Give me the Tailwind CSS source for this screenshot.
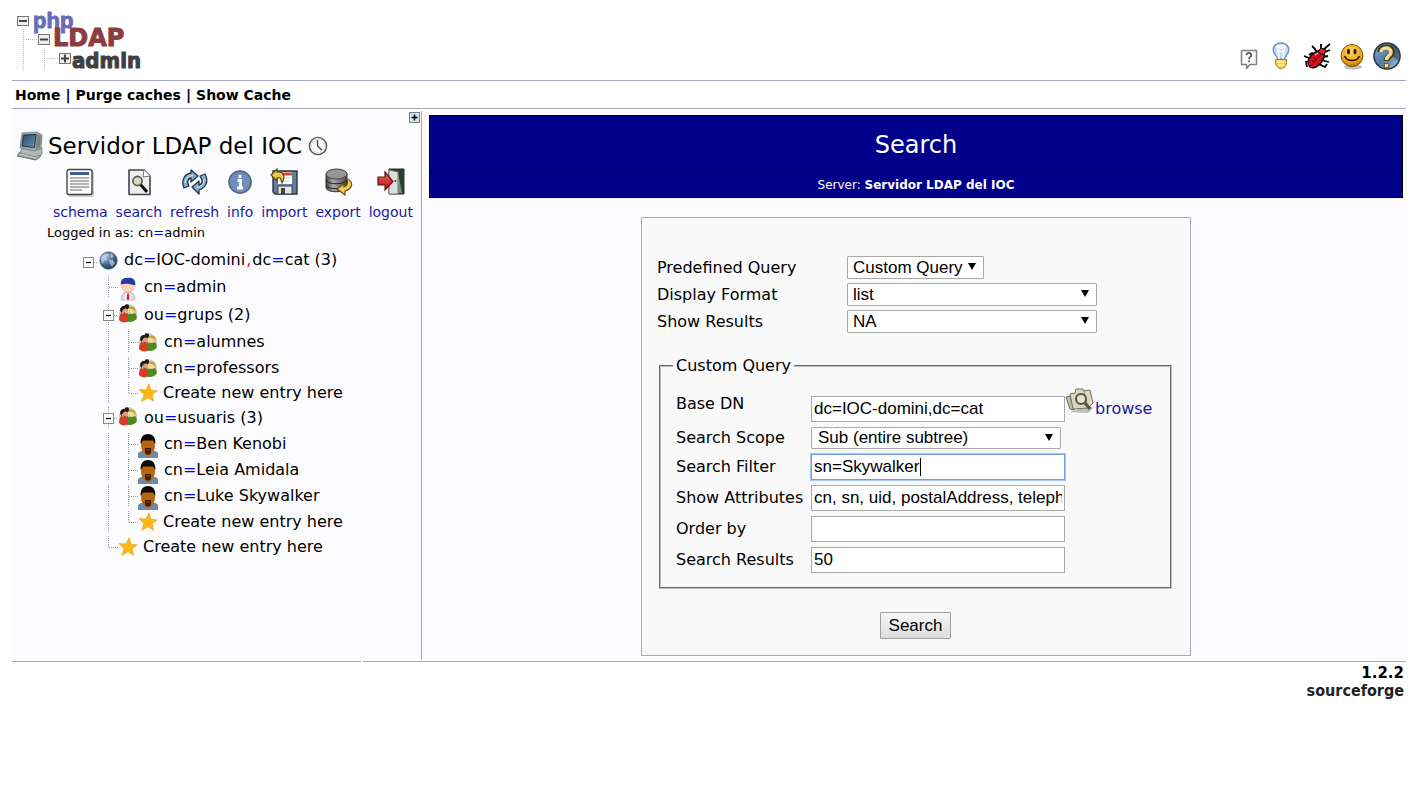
<!DOCTYPE html>
<html lang="en">
<head>
<meta charset="utf-8">
<title>phpLDAPadmin - Search</title>
<script src="https://cdn.jsdelivr.net/npm/@tailwindcss/browser@4"></script>
</head>
<body class="bg-white text-black text-[16px] font-['Verdana','DejaVu_Sans',sans-serif]">

<svg class="absolute h-0 w-0" aria-hidden="true">
  <defs>
    <radialGradient id="gGlobe" cx=".35" cy=".3" r=".8"><stop offset="0" stop-color="#9dbbd9"/><stop offset=".5" stop-color="#4b7099"/><stop offset="1" stop-color="#12243f"/></radialGradient>
    <radialGradient id="gSmile" cx=".45" cy=".3" r=".75"><stop offset="0" stop-color="#ffd65c"/><stop offset=".7" stop-color="#e9a01d"/><stop offset="1" stop-color="#9c6200"/></radialGradient>
    <linearGradient id="gHelp" x1="0" y1="0" x2="1" y2="1"><stop offset="0" stop-color="#8fb0cf"/><stop offset=".5" stop-color="#557ca3"/><stop offset="1" stop-color="#a9c6e0"/></linearGradient>
    <linearGradient id="gDisk" x1="0" x2="1"><stop offset="0" stop-color="#444"/><stop offset=".35" stop-color="#a8a8a8"/><stop offset="1" stop-color="#444"/></linearGradient>
    <linearGradient id="gScreen" x1="0" y1="0" x2="1" y2="1"><stop offset="0" stop-color="#27496b"/><stop offset="1" stop-color="#6d93b5"/></linearGradient>
    <linearGradient id="gRed" x1="0" y1="0" x2="0" y2="1"><stop offset="0" stop-color="#ef6a5a"/><stop offset="1" stop-color="#a80f0f"/></linearGradient>
  </defs>
  <symbol id="line" viewBox="0 0 20 22"><path d="M10.5 0V22" fill="none" stroke="#999" stroke-dasharray="1 1"/></symbol>
  <symbol id="tee" viewBox="0 0 20 22"><path d="M10.5 0V22M11 11.500H20" fill="none" stroke="#999" stroke-dasharray="1 1"/></symbol>
  <symbol id="corner" viewBox="0 0 20 22"><path d="M10.5 0V12M11 11.500H20" fill="none" stroke="#999" stroke-dasharray="1 1"/></symbol>
  <symbol id="minus" viewBox="0 0 20 22"><path d="M10.500 0V6M10.500 18V22M16 11.500H20" fill="none" stroke="#999" stroke-dasharray="1 1"/><rect x="5.500" y="6.500" width="10" height="10" fill="#fff" stroke="#888"/><path d="M8 11.500H13" stroke="#000" stroke-width="1.200"/></symbol>
  <symbol id="rootminus" viewBox="0 0 20 22"><path d="M16 11.500H20" fill="none" stroke="#999" stroke-dasharray="1 1"/><rect x="5.500" y="6.500" width="10" height="10" fill="#fff" stroke="#888"/><path d="M8 11.500H13" stroke="#000" stroke-width="1.200"/></symbol>
  <symbol id="globe" viewBox="0 0 20 22"><circle cx="10.500" cy="10.500" r="8.700" fill="url(#gGlobe)" stroke="#5b6a7a" stroke-width=".8"/><path d="M3 7C5 4 8 3 10 4L11 6L8 7L9 10L6 11L5 14C3 12 2.500 9 3 7ZM13 3L16 6L14 8L12 6ZM11 10L15 10L17 13L14 17L12 14Z" fill="#d7e3ee" opacity=".6"/></symbol>
  <symbol id="admin" viewBox="0 0 20 24"><path d="M3 23C3 17 6 15 10 15S17 17 17 23Z" fill="#d9dde8" stroke="#a3a8b8" stroke-width=".7"/><path d="M7.500 15.500L10 18L12.500 15.500L13 23H7Z" fill="#fff"/><path d="M9.300 16.500H10.800L11.500 22L10 23.500L8.500 22Z" fill="#d22"/><ellipse cx="10" cy="9.500" rx="6.200" ry="6" fill="#fbd6b8" stroke="#c99a78" stroke-width=".5"/><path d="M2.800 8C2.500 3 4.500 .8 9 1C14 0 17.800 2 17.300 8C14 8.500 13 6.500 7 6.800C5 7 4 7 2.800 8Z" fill="#2b3b9b"/></symbol>
  <symbol id="group" viewBox="0 0 20 20"><circle cx="10" cy="10" r="9" fill="#c9cfc0"/><path d="M1 17C1 11 3 9 7 9C10 9 11 12 11 18C8 20 3 20 1 17Z" fill="#d63c28"/><path d="M9 18C9 12 11 9 14.500 9C18 10 19.500 13 18.500 16C16 19 11 20 9 18Z" fill="#4e8a1e"/><circle cx="6.500" cy="7.500" r="3.600" fill="#e2a27c"/><path d="M2.300 8C1.500 4 4.500 2.500 7 3C6.500 .8 11.500 .6 11 3.500C12 5 11 6 10 6.500C8 4.500 5 5 3.500 10Z" fill="#221a18"/><circle cx="13.500" cy="7.500" r="3.600" fill="#f3d89a"/><path d="M10 6C11 3 16 2.500 17.300 6C17.800 8 17.300 9 16.700 9C16.500 6 13 5.500 10 6Z" fill="#c6a52d"/><path d="M5 9.500L8 10L6.500 11.500Z" fill="#742"/></symbol>
  <symbol id="star" viewBox="0 0 20 20"><path d="M11 .8L12.900 7L19.300 8L14.300 11.600L15.500 18.300L10 14.800L3.500 18.500L6 11.800L1 6.600L8 7Z" fill="#fdb714" stroke="#e9a52a" stroke-width=".7"/></symbol>
  <symbol id="user" viewBox="0 0 20 24"><path d="M0 24V19C2 17 5 16.800 7 16.500H13C16 16.800 19 17 20 19V24Z" fill="#6c8bab"/><ellipse cx="10" cy="11.500" rx="7" ry="10" fill="#b9650f"/><path d="M2.700 10C2 4 5 0 10 0S18 4 17.300 10C16.500 10 16 7.500 15 6.500H5C4 7.500 3.500 10 2.700 10Z" fill="#0c0905"/><path d="M7 14H13V17C13 20 11.500 20.500 10 20.500S7 20 7 17Z" fill="#3b1c03"/><path d="M8.500 16H11.500" stroke="#a55c1d"/></symbol>
</svg>

<div class="pl-3 pr-[9px]">
  <header class="flex h-[81px] items-end justify-between border-b border-[#a6a6cc]">
    <svg class="mb-[8px] ml-1" width="128" height="64" viewBox="0 0 128 64" role="img" aria-label="phpLDAPadmin">
      <g fill="none" stroke="#bbb" stroke-dasharray="1 1"><path d="M7.500 21V62M28.500 40V62M10 31.500H22M31 50.500H42"/></g>
      <g fill="#eee" stroke="#777"><rect x="1.500" y="8.500" width="11" height="9"/><rect x="22.500" y="26.500" width="11" height="10"/><rect x="43.500" y="45.500" width="11" height="10"/></g>
      <path d="M3 13H11M24 31.500H32M45 50.500H53M49 46.500V54.500" stroke="#444" stroke-width="2"/>
      <text x="17" y="20" font-family="Liberation Sans" font-weight="700" font-size="22" fill="#6b6cb1" stroke="#6b6cb1">php</text>
      <text x="37" y="38" font-family="DejaVu Sans" font-weight="700" font-size="24" fill="#8b3c3f" stroke="#8b3c3f">LDAP</text>
      <text x="56" y="60" font-family="Liberation Sans Narrow, DejaVu Sans Condensed" font-weight="700" font-size="22" fill="#3f3f41" stroke="#3f3f41">admin</text>
    </svg>
    <div class="mb-[9px] mr-1 flex items-end gap-3">
      <a href="#" aria-label="Hint"><svg class="mb-px" width="20" height="22" viewBox="0 0 20 22"><path d="M2.500 2.500H17.500V16.500H11L7.500 20.500V16.500H2.500Z" fill="#fafafa" stroke="#808080" stroke-width="1.500" stroke-linejoin="round"/><path d="M7.500 7C7.500 4 12.500 4.500 12.300 7.200C12.200 9 10 9 10 11.200M10 12.600V14.300" fill="none" stroke="#555" stroke-width="1.700"/></svg></a>
      <a href="#" aria-label="Request feature"><svg class="mb-px" width="20" height="28" viewBox="0 0 20 28"><path d="M6.500 17C6 13.500 2.200 12 2.200 7.700C2.200 3.800 5.500 1 10 1S17.800 3.800 17.800 7.700C17.800 12 14 13.500 13.500 17Z" fill="#c7dcf5" stroke="#6b8fc0" stroke-width="1.400"/><path d="M8 17L7 8L10 10L13 8L12 17" fill="none" stroke="#fff" stroke-width="1.500"/><ellipse cx="10" cy="4.500" rx="5" ry="2.300" fill="#f7fbff"/><path d="M4.500 17.500H15.500V22L13.500 25.500L10 27L6.500 25.500L4.500 22Z" fill="#f0cd4e" stroke="#957820" stroke-width=".8"/><path d="M6 20L13 20M7 23L13 23" stroke="#fff4ae" stroke-width="1.600"/></svg></a>
      <a href="#" aria-label="Report bug"><svg class="mb-px" width="28" height="28" viewBox="0 0 28 28"><path d="M6 13L9 11L13 13M1 14L6 16L10 17M4 25L3 20L10 18M14 11L12 7L9 4M16 22L22 25L24 22M18 18L26 20M20 15L25 14M18 7L18 2M20 8L27 2M22 10L27 8" fill="none" stroke="#000" stroke-width="1.800"/><path d="M7 25C2 19 8 12 14 9C18 7 23 10 21 15C19 22 12 28 7 25Z" fill="#d5121c" stroke="#000" stroke-width="1.300"/><path d="M15 10L18 6L23 8L21 13Z" fill="#e52a31" stroke="#000"/><path d="M8 24L19 11M11 15L13 18M14 12L16 16M9 18L11 21" stroke="#720008"/><path d="M12 13L15 11" stroke="#ff9c9c" stroke-width="1.500"/></svg></a>
      <a href="#" aria-label="Donate"><svg class="-ml-1" width="26" height="28" viewBox="0 0 26 28"><ellipse cx="14" cy="24" rx="9" ry="2.500" fill="#bbb"/><circle cx="13" cy="12.500" r="11" fill="url(#gSmile)" stroke="#855500"/><ellipse cx="9.500" cy="8.500" rx="1.500" ry="2.800" fill="#2b1c00"/><ellipse cx="16" cy="8.500" rx="1.500" ry="2.800" fill="#2b1c00"/><path d="M5.500 13C8 19 18 19 20.500 13" fill="none" stroke="#2b1c00" stroke-width="1.700"/></svg></a>
      <a href="#" aria-label="Help"><svg class="-ml-[5px]" width="30" height="30" viewBox="0 0 30 30"><circle cx="15" cy="15" r="13" fill="url(#gHelp)" stroke="#22384f" stroke-width="1.600"/><path d="M18 2C26 6 28 12 26 20L20 15Z" fill="#20364f" opacity=".5"/><path d="M8 11C8 5 20 4 20 11C20 15.500 14.500 15 14.500 20M14.500 22.500V26.500" fill="none" stroke="#4a3c0b" stroke-width="5.600"/><path d="M9 11C9 6 19 5.500 19 11C19 15 14.500 14.500 14.500 19M14.500 23V26" fill="none" stroke="#f3df8c" stroke-width="3.600"/></svg></a>
    </div>
  </header>

  <nav class="flex h-7 items-center gap-[5px] border-b border-[#a6a6cc] pl-[3px] pt-px text-[14px] font-bold">
    <a href="#">Home</a><span>|</span><a href="#">Purge caches</a><span>|</span><a href="#">Show Cache</a>
  </nav>

  <div class="mt-[2px] flex items-stretch bg-[#fcfcfe]">
    <aside class="w-[410px] shrink-0 border-r border-[#a6a6cc]">
      <div class="flex justify-end pr-[1px] pt-[1px]">
        <button type="button" aria-label="Expand tree" class="block"><svg width="11" height="11" viewBox="0 0 11 11"><rect x=".5" y=".5" width="10" height="10" fill="#d9e4ea" stroke="#71828c"/><path d="M2.500 5.500H8.500M5.500 2.500V8.500" stroke="#000" stroke-width="1.600"/></svg></button>
      </div>
      <div class="mt-[7px] flex h-8 items-center pl-1">
        <svg width="28" height="30" viewBox="0 0 28 30"><path d="M4 21L25 25L20 29L1 25Z" fill="#9fa59f" stroke="#686e6c"/><path d="M4 23L21 27M7 22L23 25.500" stroke="#e1e5e1"/><path d="M6 17L20 19L26 17V23L20 26L4 22Z" fill="#b3bab6" stroke="#6f7675" stroke-width=".8"/><path d="M6 2L21 1L26 4L25 17L20 20L4 17Z" fill="#a2aba8" stroke="#707978" stroke-width=".8"/><path d="M7.500 4L20 3.500L18.500 16.500L6 15Z" fill="url(#gScreen)" stroke="#1c3348"/><path d="M21 3L25 5L24 16L20 19Z" fill="#77817f"/></svg>
        <h2 class="ml-[4px] whitespace-nowrap text-[23px] leading-8">Servidor LDAP del IOC</h2>
        <svg class="ml-[6px]" width="20" height="20" viewBox="0 0 20 20"><circle cx="10" cy="10" r="8.600" fill="#f7f7f7" stroke="#555" stroke-width="1.400"/><circle cx="10" cy="10" r="6.600" fill="none" stroke="#aaa" stroke-dasharray="1 2.460"/><path d="M9.500 4V10L14 14" fill="none" stroke="#444" stroke-width="1.300"/></svg>
      </div>
      <div class="mt-[6px] flex justify-between pl-[41px] pr-[8px] text-center text-[14px] leading-5 text-[#1a1a9e]">
        <a href="#" class="flex flex-col items-center gap-[4px]"><svg width="30" height="30" viewBox="0 0 30 30"><rect x="3" y="3" width="26" height="26" rx="2" fill="#ccc"/><rect x="2" y="1.500" width="25" height="25" rx="2" fill="#fafafa" stroke="#444" stroke-width="1.400"/><path d="M5 5.500H24" stroke="#3d5b8c" stroke-width="3"/><path d="M5 10H24M5 13H24M5 16H24M5 19H24M5 22H17" stroke="#999" stroke-width="1.400"/></svg>schema</a>
        <a href="#" class="flex flex-col items-center gap-[4px]"><svg width="26" height="30" viewBox="0 0 26 30"><path d="M3 2H18L24 8V26.500H3Z" fill="#eee" stroke="#444" stroke-width="1.600" stroke-linejoin="round"/><path d="M18 2L17 9L24 8" fill="#fff" stroke="#777"/><path d="M14 16L21 24" stroke="#111" stroke-width="3"/><circle cx="11.500" cy="13" r="4.600" fill="#d8d9c3" stroke="#555" stroke-width="1.600"/></svg>search</a>
        <a href="#" class="flex flex-col items-center gap-[4px]"><svg width="28" height="30" viewBox="0 0 28 30"><g fill="#8caccc" stroke="#20344b" stroke-width="1.300" stroke-linejoin="round"><path d="M3 20C0 13 3 6 10 5V2L17 8L10 14V10C6 11 6 15 8 18Z"/><path d="M24 6C28 13 25 20 18 22V26L11 19L18 13V17C22 16 22 12 19 8Z"/></g><path d="M4 15C5 10 7 8 12 7.500M23 11C23 16 21 18 16 19.500" fill="none" stroke="#dae8f4"/></svg>refresh</a>
        <a href="#" class="flex flex-col items-center gap-[4px]"><svg width="26" height="30" viewBox="0 0 26 30"><circle cx="14" cy="15" r="11" fill="#ccc"/><circle cx="13" cy="14" r="11" fill="#6d8fb8" stroke="#4d6480" stroke-width="1.500"/><path d="M13 7V10M10.500 12.500H13.500V19M10 20H16" fill="none" stroke="#fff" stroke-width="2.800"/></svg>info</a>
        <a href="#" class="flex flex-col items-center gap-[4px]"><svg width="30" height="30" viewBox="0 0 30 30"><path d="M4 3H28V26H6L4 24Z" fill="#62809d" stroke="#293746" stroke-width="1.400"/><rect x="9" y="4" width="14" height="12" fill="#fff"/><path d="M9 6H23" stroke="#d84444" stroke-width="3"/><path d="M11 10H21M11 13H21" stroke="#ccc"/><rect x="9" y="18" width="14" height="8" fill="#e5e5dc" stroke="#444"/><rect x="12" y="20" width="4" height="6" fill="#444"/><path d="M2 7L8 1V4C14 3 17 8 13 15C12 10 11 9 8 10V13Z" fill="#f0c84b" stroke="#5b4610" stroke-width="1.200"/></svg>import</a>
        <a href="#" class="flex flex-col items-center gap-[4px]"><svg width="30" height="30" viewBox="0 0 30 30"><path d="M3 6V20C4 25 22 25 24 20V6Z" fill="url(#gDisk)" stroke="#333"/><path d="M3 12C4 17 22 17 24 12M3 17C4 22 22 22 24 17" fill="none" stroke="#222"/><ellipse cx="13.500" cy="6" rx="10.500" ry="5" fill="#969696" stroke="#444"/><path d="M24 11C30 13 31 20 22 23V27L14 21L21 16V19C25 18 25 14 24 11Z" fill="#f1cb58" stroke="#6b5115" stroke-width="1.200"/></svg>export</a>
        <a href="#" class="flex flex-col items-center gap-[4px]"><svg width="28" height="30" viewBox="0 0 28 30"><path d="M12 1H27V26H12Z" fill="#264033" stroke="#333"/><path d="M12 2L21 4V26H12Z" fill="#dcdfdb" stroke="#777"/><path d="M21 4L25 25H21Z" fill="#799080"/><path d="M1 9H8V4L16 13.500L8 22V17H1Z" fill="url(#gRed)" stroke="#641010" stroke-width="1.200"/><circle cx="18.500" cy="13" r="1" fill="#333"/></svg>logout</a>
      </div>
      <p class="mt-px flex items-baseline gap-1 pl-[35px] text-[13px] leading-5">Logged in as: <a href="#">cn<span class="text-[#00f]">=</span>admin</a></p>

      <ul class="mt-[3px] pl-[66px] leading-5">
        <li class="flex h-[27px] items-center"><svg class="mt-1" width="20" height="22"><use href="#rootminus"/></svg><svg class="mt-[2px]" width="20" height="22"><use href="#globe"/></svg><a href="#" class="ml-[6px]">dc<span class="text-[#00f]">=</span>IOC-domini<span class="px-px text-[#f00]">,</span>dc<span class="text-[#00f]">=</span>cat</a>&nbsp;(3)</li>
        <li class="flex h-7 items-center pl-5"><svg width="20" height="22"><use href="#tee"/></svg><svg class="mt-[3px]" width="20" height="24"><use href="#admin"/></svg><a href="#" class="ml-[6px]">cn<span class="text-[#00f]">=</span>admin</a></li>
        <li class="flex h-7 items-center pl-5"><svg width="20" height="22"><use href="#minus"/></svg><svg class="-mt-1" width="20" height="20"><use href="#group"/></svg><a href="#" class="ml-[6px]">ou<span class="text-[#00f]">=</span>grups</a>&nbsp;(2)</li>
        <li class="flex h-[26px] items-center pl-5"><svg width="20" height="22"><use href="#line"/></svg><svg width="20" height="22"><use href="#tee"/></svg><svg width="20" height="20"><use href="#group"/></svg><a href="#" class="ml-[6px]">cn<span class="text-[#00f]">=</span>alumnes</a></li>
        <li class="flex h-[26px] items-center pl-5"><svg width="20" height="22"><use href="#line"/></svg><svg width="20" height="22"><use href="#tee"/></svg><svg width="20" height="20"><use href="#group"/></svg><a href="#" class="ml-[6px]">cn<span class="text-[#00f]">=</span>professors</a></li>
        <li class="flex h-6 items-center pl-5"><svg width="20" height="22"><use href="#line"/></svg><svg width="20" height="22"><use href="#corner"/></svg><svg width="20" height="20"><use href="#star"/></svg><a href="#" class="ml-[5px]">Create new entry here</a></li>
        <li class="flex h-[26px] items-center pl-5"><svg width="20" height="22"><use href="#minus"/></svg><svg class="-mt-1" width="20" height="20"><use href="#group"/></svg><a href="#" class="ml-[6px]">ou<span class="text-[#00f]">=</span>usuaris</a>&nbsp;(3)</li>
        <li class="flex h-[26px] items-center pl-5"><svg width="20" height="22"><use href="#line"/></svg><svg width="20" height="22"><use href="#tee"/></svg><svg class="mt-1" width="20" height="24"><use href="#user"/></svg><a href="#" class="ml-[6px]">cn<span class="text-[#00f]">=</span>Ben Kenobi</a></li>
        <li class="flex h-[26px] items-center pl-5"><svg width="20" height="22"><use href="#line"/></svg><svg width="20" height="22"><use href="#tee"/></svg><svg class="mt-1" width="20" height="24"><use href="#user"/></svg><a href="#" class="ml-[6px]">cn<span class="text-[#00f]">=</span>Leia Amidala</a></li>
        <li class="flex h-[26px] items-center pl-5"><svg width="20" height="22"><use href="#line"/></svg><svg width="20" height="22"><use href="#tee"/></svg><svg class="mt-1" width="20" height="24"><use href="#user"/></svg><a href="#" class="ml-[6px]">cn<span class="text-[#00f]">=</span>Luke Skywalker</a></li>
        <li class="flex h-[26px] items-center pl-5"><svg width="20" height="22"><use href="#line"/></svg><svg width="20" height="22"><use href="#corner"/></svg><svg width="20" height="20"><use href="#star"/></svg><a href="#" class="ml-[5px]">Create new entry here</a></li>
        <li class="flex h-6 items-center pl-5"><svg width="20" height="22"><use href="#corner"/></svg><svg width="20" height="20"><use href="#star"/></svg><a href="#" class="ml-[5px]">Create new entry here</a></li>
      </ul>
    </aside>

    <main class="flex-1 pb-1 pl-[7px] pr-[3px] pt-1">
      <div class="border border-black bg-[#00008b] text-center text-white">
        <h1 class="border-b border-black pb-[10px] pt-[13px] text-[24px] leading-8">Search</h1>
        <p class="pb-[2px] pt-[3px] text-[12px] leading-5">Server: <b>Servidor LDAP del IOC</b></p>
      </div>

      <form class="mx-auto mt-[19px] w-[550px] border border-[#a6a6cc] bg-[#f9f9f9] pb-4 pl-[17px] pr-[18px] pt-[38px]">
        <div class="-ml-[2px] grid grid-cols-[190px_1fr] items-center gap-y-1 leading-5">
          <label for="query">Predefined Query</label>
          <div class="relative w-[137px]"><select id="query" class="block h-[23px] w-full appearance-none rounded-[1px] border border-[#a9a9a9] bg-white pl-[5px] font-['Liberation_Sans',sans-serif] text-[17px] leading-5"><option>Custom Query</option></select><svg class="pointer-events-none absolute right-2 top-[7px]" width="8" height="7"><path d="M0 0H8L4 7Z"/></svg></div>
          <label for="format">Display Format</label>
          <div class="relative w-[250px]"><select id="format" class="block h-[23px] w-full appearance-none rounded-[1px] border border-[#a9a9a9] bg-white pl-[5px] font-['Liberation_Sans',sans-serif] text-[17px] leading-5"><option>list</option></select><svg class="pointer-events-none absolute right-2 top-[7px]" width="8" height="7"><path d="M0 0H8L4 7Z"/></svg></div>
          <label for="show">Show Results</label>
          <div class="relative w-[250px]"><select id="show" class="block h-[23px] w-full appearance-none rounded-[1px] border border-[#a9a9a9] bg-white pl-[5px] font-['Liberation_Sans',sans-serif] text-[17px] leading-5"><option>NA</option></select><svg class="pointer-events-none absolute right-2 top-[7px]" width="8" height="7"><path d="M0 0H8L4 7Z"/></svg></div>
        </div>

        <fieldset class="mt-[23px] border-2 border-[#c0c0c0] pb-[14px] pl-[15px] [border-style:groove]">
          <legend class="-ml-[3px] px-[3px] leading-5">Custom Query</legend>
          <div class="mt-5 grid grid-cols-[135px_1fr] items-center gap-y-[5px] leading-5">
            <label for="base" class="self-start leading-4">Base DN</label>
            <div class="flex h-[26px] items-center"><input id="base" value="dc=IOC-domini,dc=cat" class="h-[26px] w-[254px] border border-[#a9a9a9] bg-white px-[2px] font-['Liberation_Sans',sans-serif] text-[17px]"><a href="#" class="flex items-center text-[#1a1a9e]"><svg class="mb-4" width="30" height="26" viewBox="0 0 30 26"><path d="M5 24L23 25L28 20L24 17Z" fill="#bbb"/><path d="M1 9L5 8L9 22L5 21Z" fill="#c4bea6" stroke="#666"/><path d="M5 6L10 5L11 1L18 1L19 3L25 2L28 15L23 20L8 21Z" fill="#ddd7bf" stroke="#77735f"/><path d="M19 3L23 20" stroke="#8b8773"/><circle cx="16" cy="11" r="5" fill="#e6e2ce" stroke="#555448" stroke-width="2"/><path d="M20 15L25 21" stroke="#555448" stroke-width="3"/></svg><span>browse</span></a></div>
            <label for="scope">Search Scope</label>
            <div class="relative w-[250px]"><select id="scope" class="block h-[22px] w-full appearance-none rounded-[1px] border border-[#a9a9a9] bg-white pl-[6px] font-['Liberation_Sans',sans-serif] text-[17px] leading-5"><option>Sub (entire subtree)</option></select><svg class="pointer-events-none absolute right-2 top-[7px]" width="8" height="7"><path d="M0 0H8L4 7Z"/></svg></div>
            <label for="filter">Search Filter</label>
            <div class="relative"><input id="filter" value="sn=Skywalker" class="block h-[26px] w-[254px] border border-[#6f9be0] bg-white px-[2px] font-['Liberation_Sans',sans-serif] text-[17px] shadow-[0_0_0_1px_#a8c6fa] outline-none"><span class="pointer-events-none absolute left-[109px] top-1 h-[18px] w-px bg-black"></span></div>
            <label for="attrs">Show Attributes</label>
            <input id="attrs" value="cn, sn, uid, postalAddress, telephoneNumber" class="h-[26px] w-[254px] border border-[#a9a9a9] bg-white px-[2px] font-['Liberation_Sans',sans-serif] text-[17px]">
            <label for="order">Order by</label>
            <input id="order" value="" class="h-[26px] w-[254px] border border-[#a9a9a9] bg-white px-[2px] font-['Liberation_Sans',sans-serif] text-[17px]">
            <label for="results">Search Results</label>
            <input id="results" value="50" class="h-[26px] w-[254px] border border-[#a9a9a9] bg-white px-[2px] font-['Liberation_Sans',sans-serif] text-[17px]">
          </div>
        </fieldset>
        <div class="mt-[23px] flex justify-center"><button type="submit" class="h-[27px] w-[71px] rounded-[1px] border border-[#a0a0a0] bg-linear-to-b from-[#f6f6f6] to-[#dddddd] font-['Liberation_Sans',sans-serif] text-[17px]">Search</button></div>
      </form>
    </main>
  </div>

  <footer>
    <div class="mt-px flex gap-[2px]"><div class="h-px w-[349px] bg-[#a6a6cc]"></div><div class="h-px flex-1 bg-[#a6a6cc]"></div></div>
    <div class="flex flex-col items-end pr-[2px] pt-px">
      <span class="text-[15px] font-bold leading-5">1.2.2</span>
      <a href="#" class="font-['DejaVu_Sans_Condensed','DejaVu_Sans',sans-serif] text-[16px] font-bold leading-4 text-[#222]">sourceforge</a>
    </div>
  </footer>
</div>
</body>
</html>
